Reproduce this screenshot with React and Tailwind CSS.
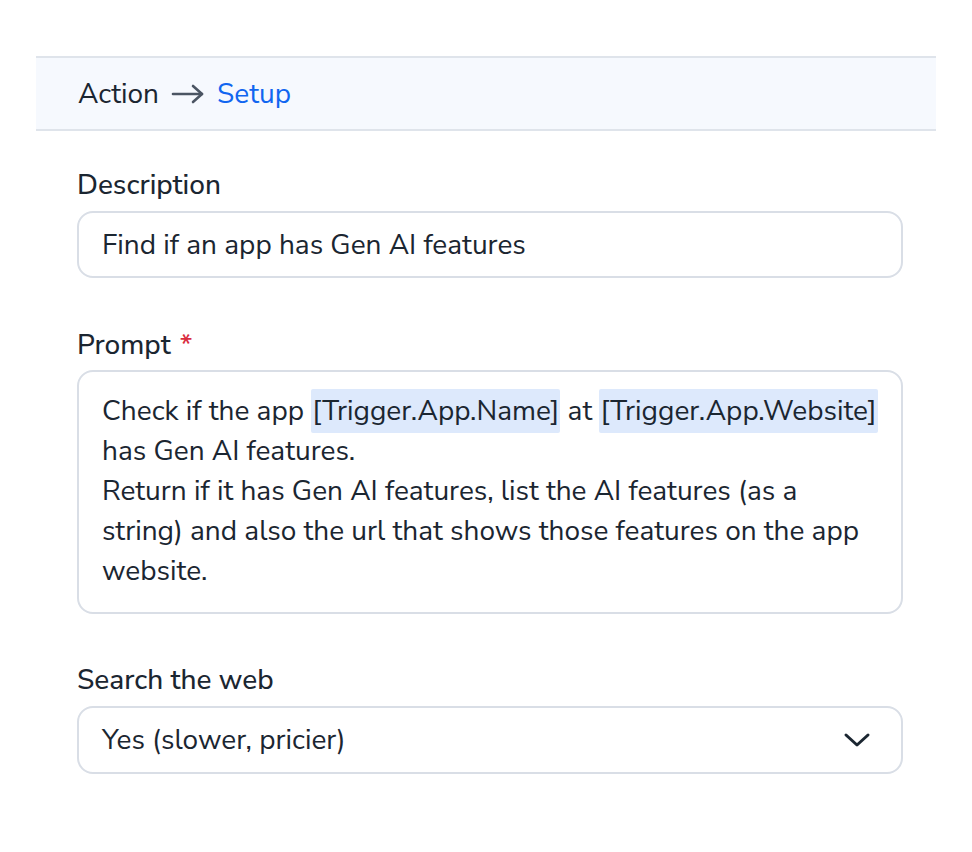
import React from "react";

const font = { fontFamily: '"Nunito Sans", Lato, "Open Sans", sans-serif' };

function Label({ children, required }) {
  return (
    <div className="mb-[7px] text-[28px] font-medium leading-[38px] text-[#1b2631]">
      {children}
      {required && <span className="ml-[9px] text-[#d92d3f]">*</span>}
    </div>
  );
}

function Token({ children }) {
  return <span className="rounded-[2px] bg-[#dde9fc] px-[1px] py-[3px]">{children}</span>;
}

export default function App() {
  return (
    <div className="min-h-screen bg-white pt-[56px]" style={font}>
      <div className="ml-[36px] w-[900px]">
        {/* breadcrumb */}
        <div className="flex h-[75px] items-center border-y-2 border-[#dfe4eb] bg-[#f6f9fe] pl-[42px] pt-[1px] text-[28px] text-[#1b2631]">
          <span>Action</span>
          <svg className="mx-[12px]" width="34" height="20" viewBox="0 0 34 20" fill="none" stroke="#4b5563" strokeWidth="2.6" strokeLinecap="round" strokeLinejoin="round">
            <path d="M2 10h29" />
            <path d="M22 2l9 8-9 8" />
          </svg>
          <span className="text-[#1166f0]">Setup</span>
        </div>

        <div className="pl-[41px] pr-[33px] pt-[35px]">
          <Label>Description</Label>
          <div className="rounded-[16px] border-2 border-[#d9dee6] px-[23px] pb-[11px] pt-[12px] text-[28px] leading-[40px] text-[#1b2631]">
            Find if an app has Gen AI features
          </div>

          <div className="mt-[48px]">
            <Label required>Prompt</Label>
            <div className="-mt-[1px] rounded-[16px] border-2 border-[#d9dee6] px-[23px] pb-[21px] pt-[19px] text-[28px] leading-[40px] text-[#1b2631]">
              <p>
                Check if the app <Token>[Trigger.App.Name]</Token> at <Token>[Trigger.App.Website]</Token> has Gen AI
                features.
              </p>
              <p>
                Return if it has Gen AI features, list the AI features (as a string) and also the url that shows those
                features on the app website.
              </p>
            </div>
          </div>

          <div className="mt-[47px]">
            <Label>Search the web</Label>
            <div className="flex items-center justify-between rounded-[16px] border-2 border-[#d9dee6] pb-[12px] pl-[23px] pr-[30px] pt-[12px] text-[28px] leading-[40px] text-[#1b2631]">
              <span>Yes (slower, pricier)</span>
              <svg width="28" height="16" viewBox="0 0 28 16" fill="none" stroke="#1b2631" strokeWidth="3" strokeLinecap="round" strokeLinejoin="round">
                <path d="M3 3l11 10L25 3" />
              </svg>
            </div>
          </div>
        </div>
      </div>
    </div>
  );
}
